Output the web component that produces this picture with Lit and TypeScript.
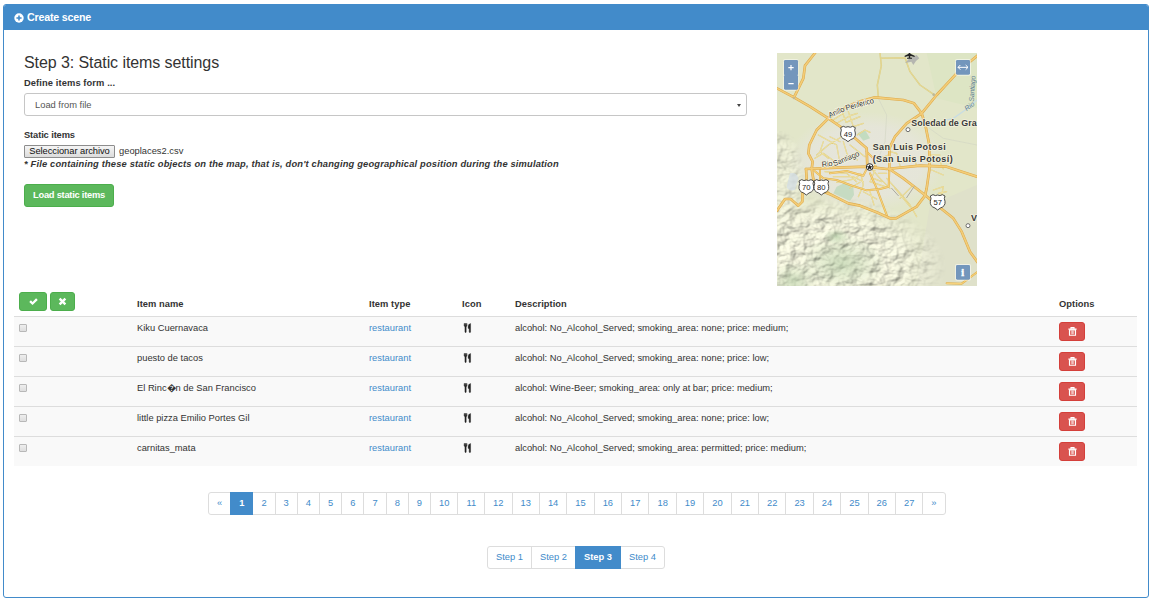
import { LitElement, html, svg, css } from "lit";
import { customElement } from "lit/decorators.js";
import { classMap } from "lit/directives/class-map.js";

interface Item {
  name: string;
  type: string;
  description: string;
}

const items: Item[] = [
  { name: "Kiku Cuernavaca", type: "restaurant", description: "alcohol: No_Alcohol_Served; smoking_area: none; price: medium;" },
  { name: "puesto de tacos", type: "restaurant", description: "alcohol: No_Alcohol_Served; smoking_area: none; price: low;" },
  { name: "El Rinc\uFFFDn de San Francisco", type: "restaurant", description: "alcohol: Wine-Beer; smoking_area: only at bar; price: medium;" },
  { name: "little pizza Emilio Portes Gil", type: "restaurant", description: "alcohol: No_Alcohol_Served; smoking_area: none; price: low;" },
  { name: "carnitas_mata", type: "restaurant", description: "alcohol: No_Alcohol_Served; smoking_area: permitted; price: medium;" },
];

const highways = [
  "M21 130 L72 157 L120 185 L175 220 L230 258 L290 310 L292 366",
  "M135 24 L105 62 L100 100 L72 157",
  "M175 220 L200 200 L260 172 L315 157 L400 165 L432 175 L455 205 L466 240 L478 300 L478 375 L470 430 L465 452 L440 485 L378 520 L360 520 L320 502 L270 482 L235 475 L185 450 L150 436 L130 402 L125 372 L128 350 L115 325 L118 300 L140 255 L175 220",
  "M625 30 L600 50 L560 85 L500 150 L455 205 L410 235 L375 275 L358 310 L358 375",
  "M108 372 L200 368 L290 365 L350 372 L450 362 L530 365 L621 395",
  "M358 372 L400 400 L465 450 L500 480 L550 520 L575 560 L600 620 L625 655",
  "M21 497 L45 462 L62 462 L85 482 L97 470 L98 435 L110 400 L108 372",
];

const avenues = [
  "M300 385 L320 430 L335 470 L352 515",
  "M130 375 L160 400 L200 405 L240 420 L290 436 L330 432 L356 425 L358 375",
  "M290 320 L310 340 L318 368",
  "M150 372 L150 425 L185 450",
  "M180 385 L230 378 L280 392 L292 368",
  "M530 715 L575 716 L621 682",
];

const rural = [
  "M325 158 L322 120 L334 62 L330 24",
  "M333 40 L405 38 L420 80 L450 120 L491 148",
];

const streets = [
  "M185 228 L220 205 M200 235 L240 212 L262 205 M215 195 L228 232 L270 215 M235 200 L250 245 L280 235",
  "M145 270 L200 300 L210 355 M140 330 L175 300 L215 275 M160 290 L150 320 L175 340 M180 275 L210 290 M135 340 L160 325 L195 350",
  "M220 290 L232 330 L262 345 M240 300 L285 335 M262 270 L285 255 L300 262",
  "M165 380 L230 385 L260 410 M190 395 L250 395 L280 410 M200 412 L255 402 L272 385 L280 420 L265 455 M240 430 L270 412",
  "M305 372 L330 400 L360 430 M315 376 L300 410 L345 425 M325 385 L350 385 M310 400 L335 410 M350 400 L395 450 L420 480 L440 515",
  "M300 440 L312 480 M280 440 L320 462 M375 430 L420 485 M390 460 L425 425",
  "M400 352 L430 335 L440 362 M480 345 L510 350 L520 372 M485 375 L520 390 M478 330 L510 330",
  "M490 435 L520 425 L515 450 M505 445 L530 440 M330 340 L355 330 M360 320 L380 325 L390 362",
];

const icon = {
  plus: svg`<circle cx="7" cy="7" r="6.6" fill="currentColor"/><path d="M7 3.4V10.6M3.4 7H10.600" stroke="#428bca" stroke-width="2.2"/>`,
  ok: svg`<path d="M.4 7.8 3 5.2 5.5 7.600 11 2 13.600 4.600 5.500 12.600Z" fill="currentColor"/>`,
  remove: svg`<path d="M3.800 1.200 7 4.400 10.200 1.200 12.800 3.800 9.600 7 12.800 10.200 10.200 12.800 7 9.600 3.800 12.800 1.200 10.200 4.400 7 1.200 3.800Z" fill="currentColor"/>`,
  trash: svg`<path d="M4.600 2.500V1H9.400V2.500M.6 3.300H13.400" fill="none" stroke="currentColor" stroke-width="1.700"/><path d="M2.300 4.500H11.700V12.800H2.300Z" fill="none" stroke="currentColor" stroke-width="1.700"/><path d="M5.100 5.600V11.300M7 5.600V11.300M8.900 5.600V11.300" stroke="currentColor" stroke-width="1"/>`,
  cutlery: svg`<path d="M1.700 0V3.700L3 5.200V13.200Q3 14 4 14Q5 14 5 13.200V5.200L6.300 3.700V0H5.400V3.200H4.600V0H3.500V3.200H2.700V0ZM11.800 0Q8 1 8 4.400V7.600H9.600V13.200Q9.600 14 10.700 14Q11.800 14 11.800 13.200Z" fill="currentColor" stroke="currentColor" stroke-width=".6"/>`,
};

const shieldPath = "M-22 -19 L-14 -23 Q-7 -18 0 -22 Q7 -18 14 -23 L22 -19 Q18 -12 22 -3 Q24 12 8 17 L0 23 L-8 17 Q-24 12 -22 -3 Q-18 -12 -22 -19Z";

@customElement("area-map")
export class AreaMap extends LitElement {
  static styles = css`
    :host { display: block; width: 200px; height: 233px; }
    svg { display: block; }
    .line { fill: none; stroke-linejoin: round; stroke-linecap: round; }
    .place { font: bold 27px "Liberation Sans", Arial, sans-serif; fill: #3a3a3a; stroke: #f2f0dc; stroke-width: 5px; paint-order: stroke; stroke-linejoin: round; }
    .road-name { font: 23px "Liberation Sans", Arial, sans-serif; fill: #333; stroke: #f2f0dc; stroke-width: 5px; paint-order: stroke; }
    .river-name { font: italic 21px "Liberation Sans", Arial, sans-serif; fill: #5f7f96; }
    .route { font: 23px "Liberation Sans", Arial, sans-serif; fill: #222; text-anchor: middle; }
    .info { font: bold 30px "Liberation Serif", serif; fill: #fff; text-anchor: middle; }
  `;

  private shield(x: number, y: number, label: string) {
    return svg`<g transform="translate(${x} ${y})">
      <path d=${shieldPath} fill="#fff" stroke="#333" stroke-width="2.6"/>
      <text class="route" y="8">${label}</text></g>`;
  }

  render() {
    return html`<svg width="200" height="233" viewBox="21 24 600 699">
      <defs>
        <filter id="relief" x="0" y="0" width="100%" height="100%" color-interpolation-filters="sRGB">
          <feTurbulence type="fractalNoise" baseFrequency=".028 .036" numOctaves="3" seed="8" result="n"/>
          <feDiffuseLighting in="n" surfaceScale="7.5" diffuseConstant="1.12" lighting-color="#e8e8d4">
            <feDistantLight azimuth="225" elevation="64"/>
          </feDiffuseLighting>
        </filter>
        <radialGradient id="soft"><stop offset="0" stop-color="#fff"/><stop offset=".65" stop-color="#fff" stop-opacity=".85"/><stop offset="1" stop-color="#fff" stop-opacity="0"/></radialGradient>
        <radialGradient id="wood"><stop offset="0" stop-color="#b4cda6"/><stop offset="1" stop-color="#b4cda6" stop-opacity="0"/></radialGradient>
        <radialGradient id="town"><stop offset="0" stop-color="#e6e5dc"/><stop offset=".7" stop-color="#e6e5dc" stop-opacity=".8"/><stop offset="1" stop-color="#e6e5dc" stop-opacity="0"/></radialGradient>
        <mask id="hills"><ellipse cx="160" cy="665" rx="370" ry="215" fill="url(#soft)"/><ellipse cx="30" cy="400" rx="75" ry="150" fill="url(#soft)" opacity=".6"/></mask>
        <path id="ring-label" d="M179 219 L228 197 L318 172"/>
        <path id="avenue-label" d="M156 366 L197 362 L275 330"/>
      </defs>
      <rect x="21" y="24" width="600" height="699" fill="#e2e6c9"/>
      <path d="M470 24H621V190L500 160Z" fill="#dde5c4"/>
      <path d="M480 480 L621 420V723H440Z" fill="#dfe1ca"/>
      <ellipse cx="290" cy="350" rx="240" ry="150" fill="url(#town)"/>
      <g mask="url(#hills)"><rect x="21" y="260" width="600" height="463" filter="url(#relief)"/></g>
      <ellipse cx="215" cy="655" rx="130" ry="85" fill="url(#wood)" opacity=".6"/>
      <ellipse cx="70" cy="710" rx="70" ry="60" fill="url(#wood)" opacity=".6"/>
      <ellipse cx="200" cy="575" rx="40" ry="25" fill="url(#wood)" opacity=".7"/>
      <path d="M60 385 Q80 380 85 400 L75 435 Q55 440 50 425Z" fill="#d5dfe4" opacity=".8"/>
      <path d="M200 425 L225 413 L250 425 L252 450 L240 468 L190 445Z" fill="#c6dbc2"/>
      <path d="M262 265 L285 255 L300 280 L280 287Z" fill="#c3dcc0"/>
      <path class="line" d="M621 165 L590 192 L550 220 L500 232 L470 235" stroke="#c9dde2" stroke-width="4"/>
      <path class="line" d="M325 160 L350 210 L345 290 L325 340 M478 250 L520 280 L621 300" stroke="#d3d6c4" stroke-width="2"/>
      ${streets.map((d) => svg`<path class="line" d=${d} stroke="#d9c77e" stroke-width="3.6"/><path class="line" d=${d} stroke="#f7ecaa" stroke-width="2"/>`)}
      ${rural.map((d) => svg`<path class="line" d=${d} stroke="#d8ca80" stroke-width="4.5"/><path class="line" d=${d} stroke="#efe3a0" stroke-width="1.8"/>`)}
      ${avenues.map((d) => svg`<path class="line" d=${d} stroke="#dfae4b" stroke-width="6"/><path class="line" d=${d} stroke="#f6d27b" stroke-width="3.4"/>`)}
      ${highways.map((d) => svg`<path class="line" d=${d} stroke="#dda94b" stroke-width="8"/>`)}
      ${highways.map((d) => svg`<path class="line" d=${d} stroke="#f3cd78" stroke-width="4.8"/>`)}
      <path class="line" d="M410 458 L432 425 M365 430 L385 452" stroke="#aaa99f" stroke-width="3"/>
      <circle cx="491" cy="149" r="4" fill="#bbb79a"/><circle cx="72" cy="159" r="4" fill="#c9b98c"/>

      <path d="M420 38 L440 30 L448 40 L438 48 L430 60 L424 50 L405 54Z" fill="#aaa" opacity=".8"/>
      <path d="M416 18 H421 V26 L434 32 V36 L421 33 V38 H426 V41 H411 V38 H416 V33 L404 36 V32 L416 26Z" fill="#222"/>

      <text class="road-name"><textPath href="#ring-label" textLength="142">Anillo Periferico</textPath></text>
      <text class="road-name"><textPath href="#avenue-label" textLength="120">Rio Santiago</textPath></text>
      <text class="river-name" transform="translate(590 199) rotate(-38)">Rio</text>
      <text class="river-name" transform="translate(611 170) rotate(-86)" textLength="78">Santiago</text>

      ${this.shield(234, 267, "49")}
      ${this.shield(109, 427, "70")}
      ${this.shield(154, 427, "80")}
      ${this.shield(503, 472, "57")}

      <circle cx="414" cy="254" r="6" fill="#fff" stroke="#555" stroke-width="2.5"/>
      <circle cx="594" cy="542" r="6" fill="#fff" stroke="#555" stroke-width="2.5"/>
      <circle cx="299" cy="366" r="10" fill="#fff" stroke="#333" stroke-width="3"/>
      <path d="M299 357.500 L301.500 363.500 L308 364 L303 368 L305 374 L299 370.500 L293 374 L295 368 L290 364 L296.500 363.500Z" fill="#222"/>
      <text class="place" x="424" y="242" textLength="196">Soledad de Gra</text>
      <text class="place" x="308" y="315" textLength="219">San Luis Potosi</text>
      <text class="place" x="308" y="351" textLength="240">(San Luis Potosí)</text>
      <text class="place" x="603" y="528">V</text>

      <rect x="39" y="42" width="47" height="95" rx="6" fill="#fff" opacity=".45"/>
      <rect x="42" y="45" width="42" height="46" rx="4" fill="#7396bc"/>
      <rect x="42" y="90" width="42" height="44" rx="4" fill="#7396bc"/>
      <path d="M63 60V76M55 68H71M55 116H71" stroke="#fff" stroke-width="3.4"/>
      <rect x="555" y="42" width="48" height="50" rx="6" fill="#fff" opacity=".5"/>
      <rect x="558" y="45" width="42" height="44" rx="4" fill="#7396bc"/>
      <path d="M564 67H594M571 60L564 67L571 74M587 60L594 67L587 74" fill="none" stroke="#fff" stroke-width="3"/>
      <rect x="555" y="657" width="48" height="50" rx="6" fill="#fff" opacity=".5"/>
      <rect x="558" y="660" width="42" height="44" rx="4" fill="#7396bc"/>
      <text class="info" x="578" y="693" stroke="#fff" stroke-width="1.500">i</text>
    </svg>`;
  }
}

@customElement("app-root")
export class AppRoot extends LitElement {
  static styles = css`
    :host {
      display: block;
      box-sizing: border-box;
      height: 603px;
      padding: 4px 6px 5px 3px;
      overflow: hidden;
      background: #fff;
      color: #333;
      font: 9.333px/13.333px "Liberation Sans", Arial, sans-serif;
    }
    * { box-sizing: border-box; }
    .panel { height: 594px; border: 1px solid #428bca; border-radius: 3px; overflow: hidden; }
    .heading { display: flex; align-items: center; gap: 3px; height: 25px; padding: 1px 10px 0 10px; background: #428bca; color: #fff; font-weight: bold; font-size: 10.667px; letter-spacing: -.2px; }
    .glyph { display: block; width: 9px; height: 9px; flex: none; }
    .heading .glyph { width: 10px; height: 10px; }
    .body { padding: 23px 11px 0 10px; }
    .top { display: flex; gap: 30px; height: 233px; padding-left: 10px; }
    .form { width: 723px; }
    h3 { margin: 0; padding-top: 1px; font-size: 16px; line-height: 18px; font-weight: normal; letter-spacing: -.08px; }
    .label { display: block; font-weight: bold; letter-spacing: .1px; }
    .label.first { margin-top: 5px; }
    .label.second { letter-spacing: -.12px; }
    .select { display: flex; align-items: center; justify-content: space-between; height: 23px; margin: 3px 0 13px; padding: 1px 5px 0 10px; border: 1px solid #c6c6c6; border-radius: 3px; color: #555; }
    .caret { border: 2px solid transparent; border-top: 3px solid #444; border-bottom: 0; }
    .file { display: flex; align-items: center; gap: 4px; height: 13px; margin-top: 2px; }
    .choose { width: 91px; height: 13px; padding: 0; border: 1px solid #8d8d8d; border-radius: 1px; background: linear-gradient(#f5f5f5, #dcdcdc); color: #111; font: inherit; line-height: 11px; letter-spacing: -.05px; text-align: center; }
    .file span { margin-top: 1px; }
    .note { display: block; font-weight: bold; font-style: italic; letter-spacing: .17px; line-height: 13px; }
    .btn { display: inline-flex; align-items: center; justify-content: center; margin: 0; padding: 0; border: 1px solid #4cae4c; border-radius: 3px; background: #5cb85c; color: #fff; font: inherit; }
    .load { width: 90px; height: 23px; margin-top: 13px; padding-top: 1px; font-weight: bold; letter-spacing: -.25px; }
    .check { width: 28px; height: 19px; }
    .clear { width: 25px; height: 19px; }
    .delete { width: 26px; height: 19px; border-color: #d43f3a; background: #d9534f; }
    .table { margin-top: 1px; }
    .row { display: grid; grid-template-columns: 118px 232px 93px 53px 544px 83px; height: 30px; padding-left: 5px; padding-top: 5px; border-top: 1px solid #ddd; background: #f9f9f9; overflow: hidden; }
    .row.head { height: 29px; padding-top: 5px; border-top: 0; background: none; font-weight: bold; letter-spacing: .05px; }
    .row.head .title { padding-top: 6px; }
    .tools { display: flex; gap: 3px; }
    .link { color: #428bca; }
    .row .glyph.fork { margin: 1px 0 0 1px; color: #222; width: 9px; height: 10px; }
    .box { display: block; appearance: none; width: 8px; height: 8px; margin: 2px 0 0; border: 1px solid #b8b8b8; border-radius: 1px; background: linear-gradient(#eee, #dedede); }
    .pager { display: flex; width: max-content; }
    .pages { margin: 26px 0 31px 194px; }
    .steps { margin-left: 473px; }
    .page { display: block; height: 23px; padding: 4px 8px 0; border: 1px solid #ddd; margin-left: -1px; color: #428bca; background: #fff; }
    .page:first-child { margin-left: 0; border-radius: 3px 0 0 3px; }
    .page:last-child { border-radius: 0 3px 3px 0; }
    .page.active { position: relative; z-index: 1; border-color: #428bca; background: #428bca; color: #fff; font-weight: bold; }
  `;

  private glyph(shape: unknown, extra = "") {
    return html`<svg class="glyph ${extra}" viewBox="0 0 14 14">${shape}</svg>`;
  }

  private pager(labels: string[], active: string) {
    return labels.map((l) => html`<a class=${classMap({ page: true, active: l === active })}>${l}</a>`);
  }

  render() {
    const pages = ["«", ...Array.from({ length: 27 }, (_, i) => String(i + 1)), "»"];
    return html`<section class="panel">
      <header class="heading">${this.glyph(icon.plus)}<span>Create scene</span></header>
      <div class="body">
        <div class="top">
          <div class="form">
            <h3>Step 3: Static items settings</h3>
            <span class="label first">Define items form ...</span>
            <div class="select"><span>Load from file</span><i class="caret"></i></div>
            <span class="label second">Static items</span>
            <div class="file"><button class="choose">Seleccionar archivo</button><span>geoplaces2.csv</span></div>
            <span class="note">* File containing these static objects on the map, that is, don't changing geographical position during the simulation</span>
            <button class="btn load">Load static items</button>
          </div>
          <area-map></area-map>
        </div>
        <div class="table">
          <div class="row head">
            <div class="tools">
              <button class="btn check">${this.glyph(icon.ok)}</button>
              <button class="btn clear">${this.glyph(icon.remove)}</button>
            </div>
            <span class="title">Item name</span><span class="title">Item type</span><span class="title">Icon</span>
            <span class="title">Description</span><span class="title">Options</span>
          </div>
          ${items.map((it) => html`<div class="row">
            <div><input type="checkbox" class="box" /></div>
            <span>${it.name}</span>
            <a class="link">${it.type}</a>
            <div>${this.glyph(icon.cutlery, "fork")}</div>
            <span>${it.description}</span>
            <div><button class="btn delete">${this.glyph(icon.trash)}</button></div>
          </div>`)}
        </div>
        <nav class="pager pages">${this.pager(pages, "1")}</nav>
        <nav class="pager steps">${this.pager(["Step 1", "Step 2", "Step 3", "Step 4"], "Step 3")}</nav>
      </div>
    </section>`;
  }
}
